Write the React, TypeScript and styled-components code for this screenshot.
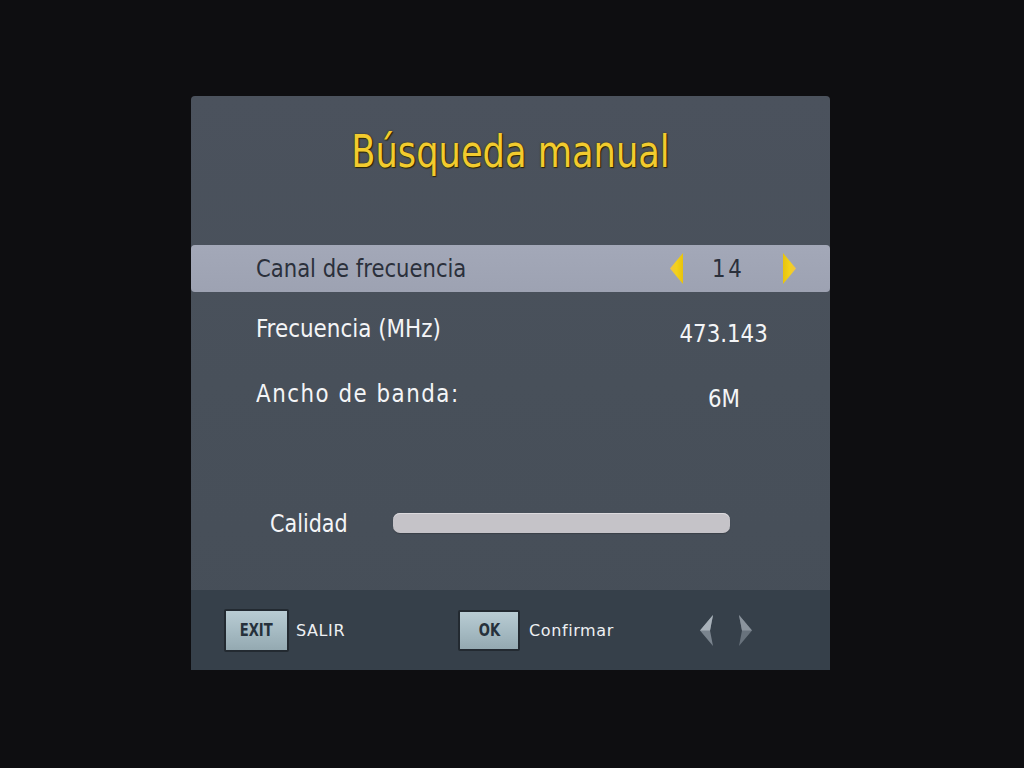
import React from "react";
import styled, { createGlobalStyle } from "styled-components";

const Global = createGlobalStyle`
  html, body { margin: 0; padding: 0; background: #0e0e11; }
  body { width: 1024px; height: 768px; overflow: hidden; font-family: "DejaVu Sans Condensed", "DejaVu Sans", sans-serif; }
`;

const Screen = styled.div`
  width: 1024px;
  height: 768px;
  padding-top: 96px;
  padding-left: 191px;
  box-sizing: border-box;
`;

const Panel = styled.div`
  width: 639px;
  height: 574px;
  display: flex;
  flex-direction: column;
  border-radius: 4px 4px 0 0;
  overflow: hidden;
  background: linear-gradient(180deg, #4b525d 0%, #48505a 50%, #464e58 100%);
`;

const Body = styled.div`
  flex: 1;
  display: flex;
  flex-direction: column;
`;

const Title = styled.h1`
  margin: 0;
  padding-top: 26px;
  height: 60px;
  line-height: 60px;
  text-align: center;
  font-weight: normal;
  font-size: 45px;
  color: #f2cb2e;
  text-shadow: 0 0 2px #3a3000, 1px 1px 1px #2a2400;
  transform: scaleX(0.87);
`;

const Rows = styled.div`
  margin-top: 63px;
  display: flex;
  flex-direction: column;
`;

const Row = styled.div<{ $active?: boolean; $h: number }>`
  height: ${(p) => p.$h}px;
  display: flex;
  align-items: center;
  padding-left: 65px;
  background: ${(p) => (p.$active ? "linear-gradient(180deg,#a3a8b8 0%,#9da2b2 100%)" : "transparent")};
  border-radius: ${(p) => (p.$active ? "4px" : "0")};
`;

const LabelCell = styled.div`
  width: 413px;
`;

const Label = styled.div<{ $active?: boolean; $wide?: boolean; $sx: number }>`
  font-size: 25px;
  color: ${(p) => (p.$active ? "#2b303b" : "#f4f5f7")};
  letter-spacing: ${(p) => (p.$wide ? "1.6px" : "0")};
  transform: scaleX(${(p) => p.$sx});
  transform-origin: left center;
  white-space: nowrap;
`;

const ValueBox = styled.div<{ $dy?: number }>`
  width: 110px;
  display: flex;
  align-items: center;
  justify-content: center;
  position: relative;
  top: ${(p) => p.$dy ?? 0}px;
`;

const Value = styled.span<{ $active?: boolean }>`
  font-family: "DejaVu Sans", sans-serif;
  font-size: 24px;
  color: ${(p) => (p.$active ? "#2b303b" : "#f4f5f7")};
  letter-spacing: ${(p) => (p.$active ? "3px" : "0")};
  display: inline-block;
  transform: scaleX(0.89);
`;

const Spinner = styled.div`
  display: flex;
  align-items: center;
`;

const SpinValue = styled(Value)`
  margin: 0 35px 0 26px;
`;

const QualityRow = styled.div`
  margin-top: 86px;
  display: flex;
  align-items: center;
  padding-left: 79px;
  height: 30px;
`;

const QLabel = styled.div`
  width: 123px;
  font-size: 25px;
  color: #f4f5f7;
  transform: scaleX(0.92);
  transform-origin: left center;
`;

const Bar = styled.div`
  width: 337px;
  height: 20px;
  border-radius: 7px;
  background: #c5c3c8;
  box-shadow: inset 0 1px 0 #dcdade, 0 1px 1px #3a4048;
`;

const Footer = styled.div`
  height: 80px;
  background: #36404a;
  display: flex;
  align-items: center;
  padding-left: 33px;
  box-sizing: border-box;
`;

const Key = styled.div<{ $w: number; $h: number }>`
  width: ${(p) => p.$w}px;
  height: ${(p) => p.$h}px;
  box-sizing: border-box;
  border: 2px solid #232a31;
  border-radius: 2px;
  background: linear-gradient(180deg, #b9ccd3 0%, #a6bbc3 50%, #94a9b1 100%);
  display: flex;
  align-items: center;
  justify-content: center;
`;

const KeyLabel = styled.span`
  font-size: 17px;
  font-weight: bold;
  color: #26313b;
  transform: scaleX(0.86);
  display: inline-block;
`;

const KeyText = styled.span<{ $w: number; $gap: number }>`
  width: ${(p) => p.$w}px;
  margin-left: ${(p) => p.$gap}px;
  font-family: "DejaVu Sans", sans-serif;
  font-size: 16px;
  color: #eef0f3;
  letter-spacing: 0.6px;
`;

const NavArrows = styled.div`
  display: flex;
  align-items: center;
  gap: 22px;
  margin-left: -2px;
`;

const YellowArrow = ({ dir }: { dir: "l" | "r" }) => (
  <svg width="15" height="31" viewBox="0 0 15 31">
    <defs>
      <linearGradient id={`ya${dir}`} x1={dir === "l" ? "0" : "1"} x2={dir === "l" ? "1" : "0"} y1="0" y2="0">
        <stop offset="0" stopColor="#f0c24a" />
        <stop offset="0.5" stopColor="#f3d21a" />
        <stop offset="1" stopColor="#e8c30c" />
      </linearGradient>
    </defs>
    {dir === "l" ? (
      <path d="M14 0 L1 15.5 L14 31 Z" fill={`url(#ya${dir})`} />
    ) : (
      <path d="M1 0 L14 15.5 L1 31 Z" fill={`url(#ya${dir})`} />
    )}
  </svg>
);

const GrayArrow = ({ dir }: { dir: "l" | "r" }) => (
  <svg width="16" height="33" viewBox="0 0 16 33">
    {dir === "l" ? (
      <>
        <path d="M14 1 L1 16.5 L14 32 L11 16.5 Z" fill="#7a848e" />
        <path d="M14 1 L1 16.5 L11 16.5 Z" fill="#a9b2ba" />
      </>
    ) : (
      <>
        <path d="M2 1 L15 16.5 L2 32 L5 16.5 Z" fill="#68727c" />
        <path d="M2 1 L15 16.5 L5 16.5 Z" fill="#8b949d" />
      </>
    )}
  </svg>
);

export default function App() {
  return (
    <>
      <Global />
      <Screen>
        <Panel>
          <Body>
            <Title>Búsqueda manual</Title>
            <Rows>
              <Row $active $h={47}>
                <LabelCell>
                  <Label $active $sx={0.94}>Canal de frecuencia</Label>
                </LabelCell>
                <Spinner>
                  <YellowArrow dir="l" />
                  <SpinValue $active>14</SpinValue>
                  <YellowArrow dir="r" />
                </Spinner>
              </Row>
              <Row $h={72}>
                <LabelCell>
                  <Label $sx={0.955}>Frecuencia (MHz)</Label>
                </LabelCell>
                <ValueBox $dy={6}>
                  <Value>473.143</Value>
                </ValueBox>
              </Row>
              <Row $h={58}>
                <LabelCell>
                  <Label $wide $sx={0.95}>Ancho de banda:</Label>
                </LabelCell>
                <ValueBox $dy={6}>
                  <Value>6M</Value>
                </ValueBox>
              </Row>
            </Rows>
            <QualityRow>
              <QLabel>Calidad</QLabel>
              <Bar />
            </QualityRow>
          </Body>
          <Footer>
            <Key $w={65} $h={43}><KeyLabel>EXIT</KeyLabel></Key>
            <KeyText $w={162} $gap={7}>SALIR</KeyText>
            <Key $w={62} $h={41}><KeyLabel>OK</KeyLabel></Key>
            <KeyText $w={172} $gap={9}>Confirmar</KeyText>
            <NavArrows>
              <GrayArrow dir="l" />
              <GrayArrow dir="r" />
            </NavArrows>
          </Footer>
        </Panel>
      </Screen>
    </>
  );
}
